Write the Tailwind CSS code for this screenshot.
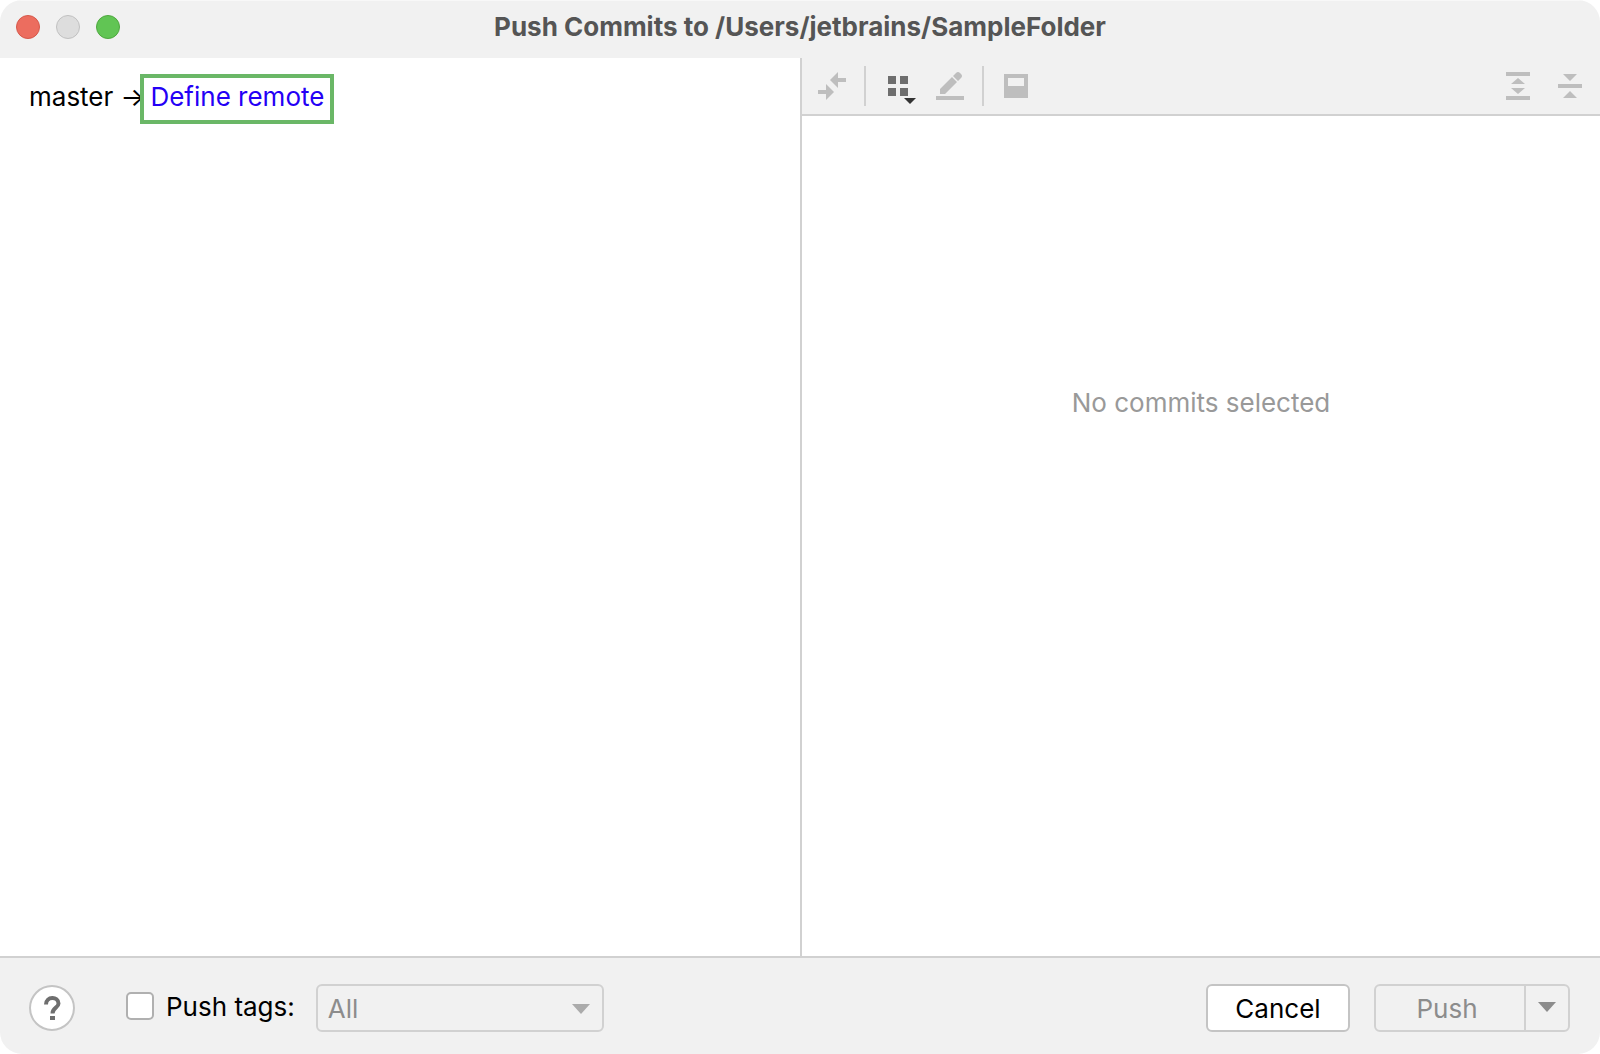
<!DOCTYPE html>
<html lang="en">
<head>
    <meta charset="UTF-8">
    <meta name="viewport" content="width=device-width, initial-scale=1.0">
    <title>Push Commits to /Users/jetbrains/SampleFolder</title>
    <script src="https://cdn.jsdelivr.net/npm/@tailwindcss/browser@4"></script>
</head>
<body class="bg-white">
    <div class="flex flex-col min-h-screen rounded-[22px] overflow-hidden bg-[#f1f1f1] font-['Inter',sans-serif] text-[26px] leading-8 text-black">
        <!-- Title bar -->
        <header class="grid grid-cols-[1fr_auto_1fr] items-center h-[58px] px-4 pb-[5px] border-t border-[#f8f8f8]">
            <div class="flex gap-4">
                <button type="button" aria-label="Close" class="size-6 rounded-full bg-[#ec6d5f] border border-[#d5594b]"></button>
                <button type="button" aria-label="Minimize" disabled class="size-6 rounded-full bg-[#dddddd] border border-[#c0c0c0]"></button>
                <button type="button" aria-label="Zoom" class="size-6 rounded-full bg-[#61c554] border border-[#4fa73f]"></button>
            </div>
            <h1 class="font-bold text-[#555555]">Push Commits to /Users/jetbrains/SampleFolder</h1>
        </header>

        <main class="flex-1 grid grid-cols-2">
            <!-- Repositories -->
            <section class="bg-white px-[29px] pt-4">
                <div class="flex items-start">
                    <span class="pt-[7px] whitespace-pre">master →</span>
                    <a href="#" class="-ml-[5px] h-[50px] border-4 border-[#6ab767] px-[6px] pt-[3px] text-[#2400f5]">Define remote</a>
                </div>
            </section>

            <!-- Commit details -->
            <section class="flex flex-col border-l-2 border-[#d1d1d1]">
                <div class="flex items-center justify-between h-[58px] px-[14px] border-b-2 border-[#d1d1d1] text-[#bebebe]">
                    <div class="flex items-center gap-4">
                        <button type="button" aria-label="Show diff" disabled>
                            <svg class="size-8" viewBox="0 0 32 32" fill="currentColor"><path d="M14 10l8-8v6h8v4h-8v6zM2 20h8v-6l8 8-8 8v-6H2z"/></svg>
                        </button>
                        <div class="w-[2px] h-10 bg-[#d1d1d1]"></div>
                        <button type="button" aria-label="Group by" class="px-[2px]">
                            <svg class="size-8 overflow-visible" viewBox="0 0 32 32"><path fill="#6e6e6e" d="M4 6h8v8H4zM16 6h8v8h-8zM4 18h8v8H4zM16 18h8v8h-8z"/><path fill="#333333" d="M20 28h12l-6 6z"/></svg>
                        </button>
                        <button type="button" aria-label="Edit source" disabled>
                            <svg class="size-8" viewBox="0 0 32 32" fill="currentColor"><path d="M2 26h28v4H2zM6 24v-5L18 7l5 5-12 12zM19 6l3-3q2-2 4 0l1 1q2 2 0 4l-3 3z"/></svg>
                        </button>
                        <div class="w-[2px] h-10 bg-[#d1d1d1]"></div>
                        <button type="button" aria-label="Show details" disabled>
                            <svg class="size-8" viewBox="0 0 32 32" fill="currentColor"><path fill-rule="evenodd" d="M4 4h24v24H4zM8 8v8h16V8z"/></svg>
                        </button>
                    </div>
                    <div class="flex items-center gap-5">
                        <button type="button" aria-label="Expand all" disabled>
                            <svg class="size-8" viewBox="0 0 32 32" fill="currentColor"><path d="M4 2h24v4H4zM4 26h24v4H4zM9 14l7-6 7 6zM9 18h14l-7 6z"/></svg>
                        </button>
                        <button type="button" aria-label="Collapse all" disabled>
                            <svg class="size-8" viewBox="0 0 32 32" fill="currentColor"><path d="M4 14h24v4H4zM9 4h14l-7 7zM9 28l7-7 7 7z"/></svg>
                        </button>
                    </div>
                </div>
                <div class="flex-1 bg-white pt-[271px] text-center text-[#999999]">No commits selected</div>
            </section>
        </main>

        <!-- Actions -->
        <footer class="flex items-center justify-between border-t-2 border-[#d1d1d1] pt-[26px] pb-[22px] pl-[29px] pr-[30px]">
            <div class="flex items-center">
                <button type="button" aria-label="Help" class="flex items-center justify-center size-[46px] rounded-full bg-white border-2 border-[#c4c4c4]">
                    <svg class="size-7" viewBox="0 0 28 28"><path fill="none" stroke="#6e6e6e" stroke-width="4" d="M8 10.500C8 2 20.500 2 20.500 9.500C20.500 14 14.500 13.500 14.500 19.500"/><path fill="#6e6e6e" d="M12 22h5v4h-5z"/></svg>
                </button>
                <input id="push-tags" type="checkbox" class="appearance-none ml-[51px] mb-1 size-7 rounded-[5px] bg-white border-2 border-[#b0b0b0]">
                <label for="push-tags" class="ml-3 mb-[2px]">Push tags:</label>
                <div class="relative ml-[21px]">
                    <select aria-label="Tags to push" disabled class="block appearance-none w-72 h-12 pl-[10px] pt-[2px] rounded-md border-2 border-[#d1d1d1] bg-[#f1f1f1] text-[#8c8c8c] opacity-100">
                        <option>All</option>
                    </select>
                    <svg class="absolute right-[14px] top-5 w-[18px] h-[10px]" viewBox="0 0 18 10" fill="#ababab"><path d="M0 0h18l-9 10z"/></svg>
                </div>
            </div>
            <div class="flex gap-6">
                <button type="button" class="w-36 h-12 pt-[2px] rounded-md bg-white border-2 border-[#c4c4c4]">Cancel</button>
                <div class="flex w-[196px] h-12 rounded-md border-2 border-[#d1d1d1] text-[#8c8c8c]">
                    <button type="button" disabled class="flex-1 pt-[2px] pr-[6px]">Push</button>
                    <button type="button" aria-label="More push options" disabled class="flex justify-center w-11 pt-4 border-l-2 border-[#d1d1d1]">
                        <svg class="w-[18px] h-[10px]" viewBox="0 0 18 10" fill="currentColor"><path d="M0 0h18l-9 10z"/></svg>
                    </button>
                </div>
            </div>
        </footer>
    </div>
</body>
</html>
